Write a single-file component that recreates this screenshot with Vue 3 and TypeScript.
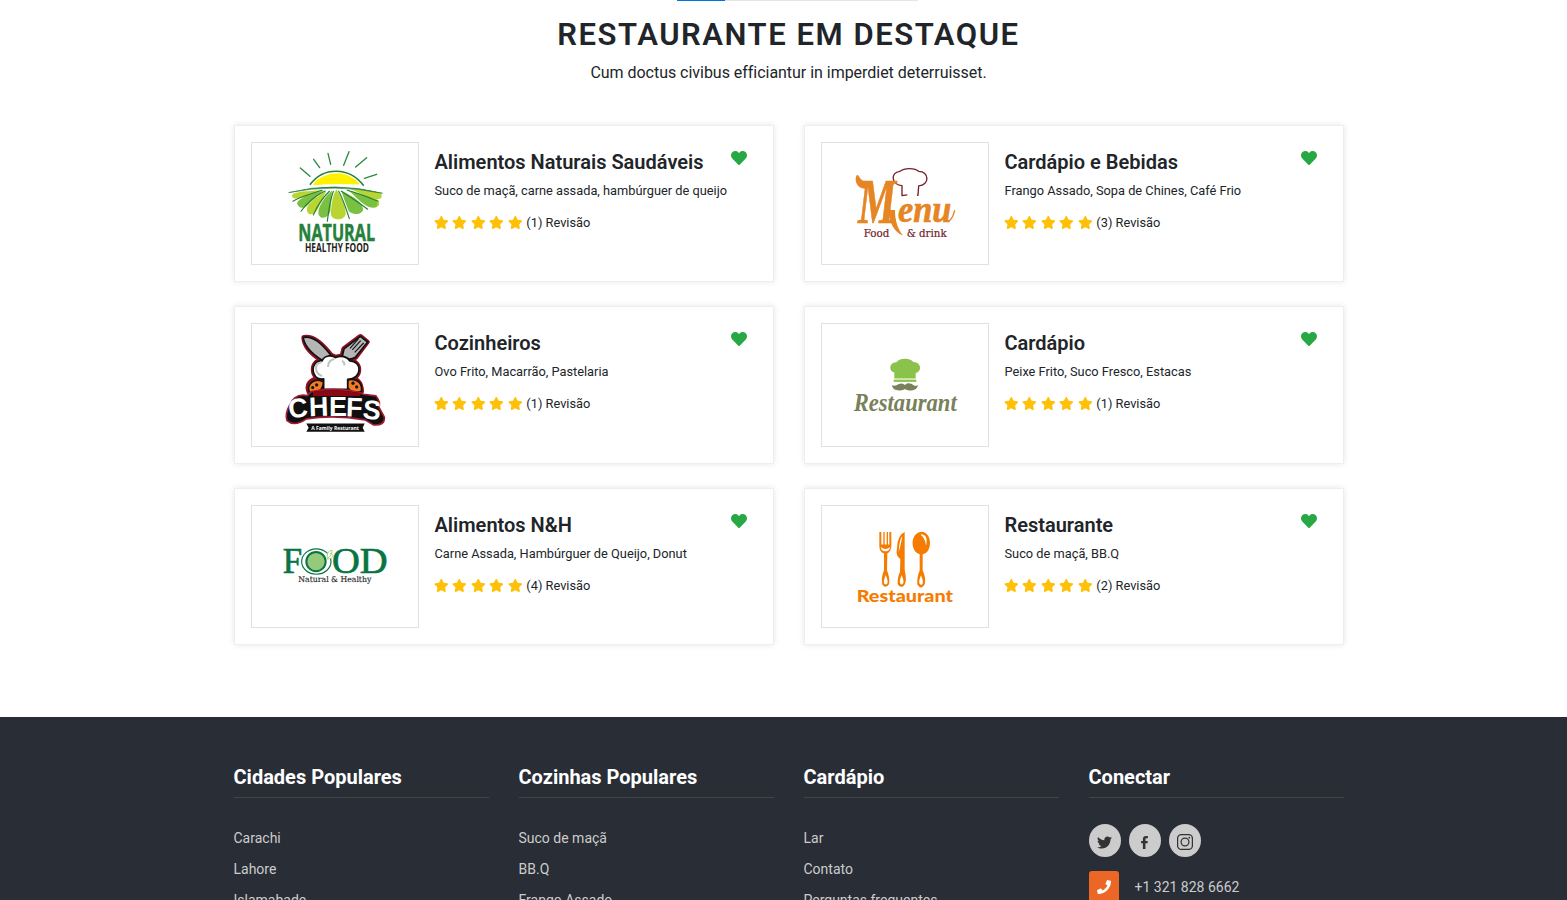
<script setup lang="ts">
interface Restaurant {
  name: string
  dishes: string
  reviews: number
  logo: string
}

interface LinkColumn {
  title: string
  links: string[]
}

const restaurants: Restaurant[] = [
  { name: 'Alimentos Naturais Saudáveis', dishes: 'Suco de maçã, carne assada, hambúrguer de queijo', reviews: 1, logo: 'natural' },
  { name: 'Cardápio e Bebidas', dishes: 'Frango Assado, Sopa de Chines, Café Frio', reviews: 3, logo: 'menu' },
  { name: 'Cozinheiros', dishes: 'Ovo Frito, Macarrão, Pastelaria', reviews: 1, logo: 'chefs' },
  { name: 'Cardápio', dishes: 'Peixe Frito, Suco Fresco, Estacas', reviews: 1, logo: 'moustache' },
  { name: 'Alimentos N&H', dishes: 'Carne Assada, Hambúrguer de Queijo, Donut', reviews: 4, logo: 'food' },
  { name: 'Restaurante', dishes: 'Suco de maçã, BB.Q', reviews: 2, logo: 'cutlery' },
]

const columns: LinkColumn[] = [
  { title: 'Cidades Populares', links: ['Carachi', 'Lahore', 'Islamabade'] },
  { title: 'Cozinhas Populares', links: ['Suco de maçã', 'BB.Q', 'Frango Assado'] },
  { title: 'Cardápio', links: ['Lar', 'Contato', 'Perguntas frequentes'] },
]
</script>

<template>
  <div class="viewport">
    <div class="page">
      <div class="tabs-line"><span class="tabs-active"></span></div>
      <header class="heading">
        <h2>RESTAURANTE EM DESTAQUE</h2>
        <p>Cum doctus civibus efficiantur in imperdiet deterruisset.</p>
      </header>

      <main class="grid">
        <article v-for="r in restaurants" :key="r.name" class="card">
          <div class="logo">
            <svg v-if="r.logo === 'natural'" viewBox="6 9 498 365" preserveAspectRatio="none">
              <g stroke="#2c8a43" stroke-width="4" stroke-linecap="round" fill="none">
                <path d="M151 84 180 109M191 58 209 83M234 40 242 73M297 35 281 76M350 53 317 81M380 103 343 115" />
              </g>
              <path d="M190 136C188 128 220 101 258 100C296 99 326 124 329 134Q260 130 190 136Z" fill="#fff100" />
              <path d="M181 133C220 80 298 80 340 136" fill="none" stroke="#258039" stroke-width="4.5" stroke-linecap="round" />
              <g fill="#b9d532">
                <path d="M216 151C168 154 126 155 126 168C128 180 150 181 216 151Z" />
                <path d="M229 153C201 169 166 194 171 213C175 229 193 225 203 208Z" />
                <path d="M259 149C247 166 242 205 243 225C247 242 283 244 287 222C287 195 272 168 259 149Z" />
                <path d="M292 151C320 171 343 199 365 203C389 207 397 184 376 175Z" />
                <path d="M303 148C345 151 383 151 394 163C401 180 378 181 353 171Z" />
              </g>
              <g fill="#7ac143">
                <path d="M222 151C185 162 145 174 141 190C144 206 165 211 181 187Z" />
                <path d="M246 152C224 171 200 205 206 225C216 242 236 231 241 214Z" />
                <path d="M274 152C281 175 291 203 297 215C311 228 342 223 339 205C332 179 302 168 274 152Z" />
                <path d="M300 153C320 172 344 204 371 203C391 199 385 180 354 168Z" />
              </g>
              <path d="M292 151C318 158 352 171 384 184M274 154C308 176 329 190 353 208M266 154C278 174 290 211 298 236M250 154C239 184 236 214 232 244M238 154C218 174 199 204 190 225M225 153C197 167 171 188 153 214M216 151C183 162 150 170 129 184" fill="none" stroke="#258039" stroke-width="3.5" stroke-linecap="round" />
              <path d="M116 158Q253 123 397 160Q253 130 116 158Z" fill="#258039" stroke="#258039" stroke-width="2" />
              <text x="145" y="303" font-family="'Open Sans', sans-serif" font-weight="700" font-size="69" textLength="230" lengthAdjust="spacingAndGlyphs" fill="#258039" stroke="#258039" stroke-width="1.5">NATURAL</text>
              <text x="165" y="335" font-family="'Open Sans', sans-serif" font-weight="700" font-size="35" textLength="192" lengthAdjust="spacingAndGlyphs" fill="#231f20">HEALTHY FOOD</text>
            </svg>

            <svg v-else-if="r.logo === 'menu'" viewBox="6 9 498 365" preserveAspectRatio="none">
              <path d="M262 165 246 167 246 137C215 135 209 97 240 94C252 83 285 83 296 94C328 94 330 135 296 138L294 166 291 166" fill="none" stroke="#741f2d" stroke-width="4" stroke-linejoin="round" />
              <g font-family="'Liberation Serif', serif" font-style="italic" font-weight="700" fill="#e68524" stroke="#e68524" stroke-width="2">
                <text x="114" y="249" font-size="192" textLength="114" lengthAdjust="spacingAndGlyphs">M</text>
                <text x="234" y="245" font-size="112" textLength="160" lengthAdjust="spacingAndGlyphs">enu</text>
              </g>
              <path d="M110 106C117 99 118 126 144 127L140 146C112 150 101 122 110 106ZM207 210C205 244 222 276 249 287C232 265 225 240 225 210Z" fill="#e68524" />
              <path d="M388 243Q400 232 404 211" fill="none" stroke="#e68524" stroke-width="4" />
              <g font-family="'DejaVu Serif', serif" font-size="31" fill="#741f2d" stroke="#741f2d" stroke-width=".6">
                <text x="131" y="292" textLength="77" lengthAdjust="spacingAndGlyphs">Food</text>
                <text x="260" y="292" textLength="120" lengthAdjust="spacingAndGlyphs">&amp; drink</text>
              </g>
            </svg>

            <svg v-else-if="r.logo === 'chefs'" viewBox="6 6 498 365" preserveAspectRatio="none">
              <g stroke-linejoin="round">
                <g fill="#8b1023" stroke="#8b1023" stroke-width="16">
                  <path d="M162 47C190 43 214 64 242 99L218 116C178 92 163 66 162 47Z" />
                  <path d="M331 44 351 60 316 106Q296 119 277 102L282 81Z" />
                  <path d="M222 202V172C182 176 180 114 216 117C224 98 248 100 257 107C271 99 293 104 299 117C336 118 335 172 293 172V202Z" />
                  <path d="M178 211Q166 182 198 171L220 183Q210 220 178 211ZM295 172Q333 166 334 209Q308 221 293 192Z" />
                </g>
                <g fill="#b5b5b5" stroke="#111" stroke-width="5">
                  <path d="M160 46C190 41 214 64 242 99L218 116C178 92 161 65 160 46Z" />
                  <path d="M331 43 353 60 316 106Q296 119 277 102L282 81Z" />
                </g>
                <path d="M332 56 307 84M341 63 314 91M325 51 300 79" stroke="#161616" stroke-width="3.5" />
                <path d="M178 211C168 184 196 166 221 180Q217 218 178 211ZM293 174C325 166 338 188 334 209Q305 218 292 196Z" fill="#f47c20" stroke="#111" stroke-width="5" />
                <path d="M221 202V171C179 177 180 112 216 117C224 98 248 100 257 107C271 99 293 104 299 117C338 117 337 172 293 172V202Z" fill="#fff" stroke="#111" stroke-width="5" />
                <path d="M214 121C190 126 195 155 216 162M234 135Q234 114 254 111M276 116Q283 120 284 130" fill="none" stroke="#c2c2c2" stroke-width="6" />
                <g fill="#151515"><circle cx="200" cy="189" r="5" /><circle cx="188" cy="197" r="5" /><circle cx="309" cy="184" r="5" /><circle cx="320" cy="195" r="5" /></g>
                <path d="M184 209Q255 195 327 211L340 217 378 222Q394 243 386 254L403 286Q405 312 370 309L345 294Q254 278 169 291Q134 316 111 296Q104 276 119 250Q134 213 172 221Z" fill="#101010" stroke="#a01d35" stroke-width="5" />
                <path d="M189 209Q256 199 332 213L330 222H189Z" fill="#8b0711" />
              </g>
              <text x="118 178 237 287 336" y="289 283 281 283 289" rotate="-6 -2 0 2 6" font-family="'Liberation Sans', sans-serif" font-weight="700" font-size="81" fill="#fff">CHEFS</text>
              <path d="M169 305H344L338 318 344 330H169L176 318Z" fill="#111" />
              <text x="184" y="323" font-family="'Open Sans', sans-serif" font-weight="700" font-size="18" textLength="143" lengthAdjust="spacingAndGlyphs" fill="#fff">A Family Resturant</text>
            </svg>

            <svg v-else-if="r.logo === 'moustache'" viewBox="6 6 498 365" preserveAspectRatio="none">
              <path d="M223 170V152C205 148 207 120 229 121C239 108 269 107 280 120C304 119 307 149 287 153V170Z" fill="#8bc34a" />
              <path d="M221 173H289V180H221Z" fill="#8bc34a" />
              <path d="M216 190Q226 194 235 187C246 181 254 187 255 190C261 181 274 184 281 190Q288 194 294 189C292 207 266 209 255 201C242 209 217 207 216 190Z" fill="#79815a" />
              <text x="101" y="266" font-family="'Liberation Serif', serif" font-style="italic" font-weight="700" font-size="76" textLength="309" lengthAdjust="spacingAndGlyphs" fill="#79815a">Restaurant</text>
            </svg>

            <svg v-else-if="r.logo === 'food'" viewBox="6 6 498 365" preserveAspectRatio="none">
              <g font-family="'Liberation Serif', serif" font-size="107" fill="#087443" stroke="#087443" stroke-width="2">
                <text x="98" y="208" textLength="58" lengthAdjust="spacingAndGlyphs">F</text>
                <text x="246" y="208" textLength="167" lengthAdjust="spacingAndGlyphs">OD</text>
              </g>
              <ellipse cx="199" cy="173" rx="44" ry="38" fill="#fff" stroke="#087443" stroke-width="3.5" />
              <circle cx="198" cy="173" r="29" fill="#96c97c" stroke="#087443" stroke-width="6" />
              <path d="M231 164Q246 156 246 139Q231 139 231 164M231 165C251 165 253 151 240 149" fill="#fff" stroke="#a8d47e" stroke-width="3" />
              <text x="145" y="235" font-family="'DejaVu Serif', serif" font-size="24" textLength="219" lengthAdjust="spacingAndGlyphs" fill="#252525" stroke="#252525" stroke-width=".4">Natural &amp; Healthy</text>
            </svg>

            <svg v-else viewBox="6 6 498 365" preserveAspectRatio="none">
              <g fill="#f57c00">
                <path d="M178 84H184V122H190V84H194V122H200V84H204V122H208V84H214V129Q211 144 202 149L201 199Q211 225 207 241Q196 256 187 242Q182 224 192 199V149Q178 143 178 126Z" />
                <path d="M254 84V198C261 230 257 239 250 247Q239 253 233 240Q232 219 240 204L241 165Q226 156 231 132Q232 93 254 84Z" />
                <path d="M304 83C338 84 338 146 308 151L308 199Q319 223 314 242Q303 259 292 242Q290 222 299 199V151C269 141 271 86 304 83Z" />
              </g>
              <g fill="#fff">
                <path d="M182 129Q196 141 211 129Q207 143 196 142Q184 142 182 129Z" />
                <path d="M197 213Q209 240 197 242Q186 240 197 213ZM245 213Q256 239 245 242Q234 239 245 213ZM303 214Q314 240 304 243Q291 241 303 214Z" />
                <path d="M247 97Q238 105 236 144Q241 130 247 97ZM301 91Q326 91 318 125Q317 105 301 91Z" />
              </g>
              <text x="110" y="293" font-family="Lato, sans-serif" font-weight="900" font-size="52" textLength="289" lengthAdjust="spacingAndGlyphs" fill="#f57c00">Restaurant</text>
            </svg>
          </div>

          <div class="details">
            <h3>{{ r.name }}</h3>
            <p class="dishes">{{ r.dishes }}</p>
            <div class="rating">
              <span class="stars">
                <svg v-for="n in 5" :key="n" viewBox="0 0 576 512">
                  <path d="M259.3 17.8 194 150.2 47.9 171.5c-26.2 3.8-36.7 36.1-17.7 54.6l105.7 103-25 145.5c-4.5 26.3 23.2 46 46.4 33.7L288 439.6l130.7 68.7c23.2 12.2 50.9-7.4 46.4-33.7l-25-145.5 105.7-103c19-18.5 8.5-50.8-17.7-54.6L382 150.2 316.7 17.8c-11.7-23.6-45.6-23.9-57.4 0z" fill="#ffc107" />
                </svg>
              </span>
              <span>({{ r.reviews }}) Revisão</span>
            </div>
          </div>
          <svg class="heart" viewBox="0 0 512 512" aria-label="Favorito">
            <path d="M462.3 62.6C407.5 15.9 326 24.3 275.7 76.2L256 96.5l-19.7-20.3C186.1 24.3 104.5 15.9 49.7 62.6c-62.8 53.6-66.1 149.8-9.9 207.9l193.5 199.8c12.5 12.9 32.8 12.9 45.3 0l193.5-199.8c56.3-58.1 53-154.3-9.8-207.9z" fill="#28a745" />
          </svg>
        </article>
      </main>

      <footer class="footer">
        <section v-for="c in columns" :key="c.title">
          <h3>{{ c.title }}</h3>
          <ul>
            <li v-for="l in c.links" :key="l">{{ l }}</li>
          </ul>
        </section>
        <section>
          <h3>Conectar</h3>
          <div class="social">
            <span>
              <svg viewBox="0 0 512 512"><path d="M459.4 151.7c.3 4.5.3 9.1.3 13.6 0 138.7-105.6 298.6-298.6 298.6-59.5 0-114.7-17.2-161.1-47.1 8.4 1 16.6 1.3 25.3 1.3 49.1 0 94.2-16.6 130.3-44.8-46.1-1-84.8-31.2-98.1-72.8 6.5 1 13 1.6 19.8 1.6 9.4 0 18.8-1.3 27.6-3.6-48.1-9.7-84.1-52-84.1-103v-1.3c14 7.8 30.2 12.7 47.4 13.3-28.3-18.8-46.8-51-46.8-87.4 0-19.5 5.2-37.4 14.3-53 51.7 63.7 129.3 105.3 216.4 109.8-1.6-7.8-2.6-15.9-2.6-24C249.5 95.1 296.3 48 354.4 48c30.2 0 57.5 12.7 76.7 33.1 23.7-4.5 46.5-13.3 66.6-25.3-7.8 24.4-24.4 44.8-46.1 57.8 21.1-2.3 41.6-8.1 60.4-16.2-14.3 20.8-32.2 39.3-52.6 54.3z" fill="#333" /></svg>
            </span>
            <span>
              <svg viewBox="0 0 16 16"><path d="M6.3 15V8.9H4.4V6.4h1.9V4.5C6.3 2.4 7.5 1.1 9.6 1.1h2v2.4h-1.4c-.9 0-1.2.4-1.2 1.2v1.7h2.5l-.3 2.5H9V15Z" fill="#333" /></svg>
            </span>
            <span>
              <svg class="instagram" viewBox="0 0 16 16" fill="none" stroke="#333" stroke-width="1.25"><rect x=".6" y=".6" width="14.8" height="14.8" rx="3.6" /><circle cx="8" cy="8" r="3.9" /><circle cx="12.3" cy="3.7" r=".9" fill="#333" stroke="none" /></svg>
            </span>
          </div>
          <div class="contact">
            <span class="phone">
              <svg viewBox="0 0 512 512"><path d="M493.4 24.6l-104-24c-11.3-2.6-22.9 3.3-27.5 13.9l-48 112c-4.2 9.8-1.4 21.3 6.9 28l60.6 49.6c-36 76.7-98.9 140.5-177.2 177.2l-49.6-60.6c-6.8-8.3-18.2-11.1-28-6.9l-112 48C3.9 366.5-2 378.1.6 389.4l24 104C27.1 504.2 36.7 512 48 512c256.1 0 464-207.5 464-464 0-11.2-7.7-20.9-18.6-23.4z" fill="#fff" /></svg>
            </span>
            <span>+1 321 828 6662</span>
          </div>
        </section>
      </footer>
    </div>
  </div>
</template>

<style>
body {
  margin: 0;
  background: #fff;
}
</style>

<style scoped>
.viewport {
  height: 900px;
  overflow: hidden;
}
.page {
  width: 1577px;
  height: 900px;
  overflow: hidden;
  font-family: Roboto, sans-serif;
  color: #212529;
}
.tabs-line {
  width: 241px;
  height: 1px;
  margin-left: 677px;
  background: #e5e5e5;
}
.tabs-active {
  display: block;
  width: 48px;
  height: 1px;
  background: #0275d8;
}
.heading {
  height: 123.8px;
  text-align: center;
}
.heading h2 {
  margin: 0;
  padding-top: 15px;
  font-size: 31px;
  line-height: 38px;
  font-weight: 600;
  letter-spacing: 1.55px;
}
.heading p {
  margin: 7px 0 0;
  font-size: 16px;
  line-height: 24px;
  letter-spacing: -0.03px;
}
.grid {
  display: grid;
  grid-template-columns: 540px 540px;
  gap: 24px 30px;
  width: 1110px;
  margin: 0 auto;
}
.card {
  display: flex;
  box-sizing: border-box;
  height: 157.5px;
  padding: 16px;
  border: 1px solid #eee;
  box-shadow: 0 0 6px rgba(0, 0, 0, 0.1);
  background: #fff;
}
.logo {
  box-sizing: border-box;
  flex: none;
  width: 168px;
  height: 123.5px;
  border: 1px solid #dee2e6;
}
.logo svg {
  display: block;
  width: 100%;
  height: 100%;
}
.details {
  flex: 1;
  min-width: 0;
  margin-left: 16px;
  white-space: nowrap;
}
.details h3 {
  margin: 8px 0 0;
  font-size: 20px;
  line-height: 24px;
  font-weight: 600;
}
.dishes {
  margin: 7px 0 0;
  font-size: 12.8px;
  line-height: 20px;
}
.rating {
  display: flex;
  align-items: center;
  gap: 4px;
  margin-top: 12px;
  font-size: 12.8px;
  line-height: 20px;
}
.stars {
  display: flex;
  gap: 3.9px;
  margin: 0 0 1px -0.7px;
}
.stars svg {
  width: 14.6px;
  height: 13px;
}
.heart {
  flex: none;
  width: 16px;
  height: 16px;
  margin: 8px 10px 0 0;
}
.footer {
  display: grid;
  grid-template-columns: repeat(4, 255px);
  gap: 30px;
  height: 183px;
  margin-top: 71.7px;
  padding: 0 233.5px;
  background: #292d36;
  color: #ccc;
  font-size: 14px;
}
.footer h3 {
  margin: 0;
  padding: 48px 0 8px;
  border-bottom: 1px solid #444;
  color: #fff;
  font-size: 20px;
  line-height: 24px;
  font-weight: 700;
}
.footer ul {
  margin: 25px 0 0;
  padding: 0;
  list-style: none;
}
.footer li {
  height: 31px;
  line-height: 31px;
}
.social {
  display: flex;
  gap: 8px;
  margin-top: 26px;
}
.social span {
  display: flex;
  align-items: center;
  justify-content: center;
  box-sizing: border-box;
  width: 32px;
  height: 33px;
  padding-top: 3px;
  border-radius: 50%;
  background: #ccc;
}
.social svg {
  width: 15px;
  height: 15px;
  margin: 1px 0 0;
}
.social .instagram {
  width: 16px;
  height: 16px;
  margin: 0;
}
.contact {
  display: flex;
  align-items: center;
  gap: 16px;
  margin-top: 14px;
}
.phone {
  display: flex;
  align-items: center;
  justify-content: center;
  width: 30px;
  height: 32px;
  border-radius: 3px;
  background: #ec6726;
}
.phone svg {
  width: 14px;
  height: 14px;
}
</style>
